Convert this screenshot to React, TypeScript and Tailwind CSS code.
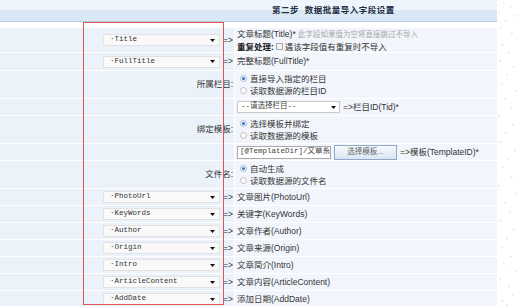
import React from "react";

const cjk = { fontFamily: '"Liberation Sans", "Noto Sans CJK SC", sans-serif' };
const mono = { fontFamily: '"Liberation Mono", "Noto Sans CJK SC", monospace' };

function Arrow() {
  return (
    <svg width="5" height="3" viewBox="0 0 5 3" className="shrink-0">
      <polygon points="0,0 5,0 2.5,3" fill="#111" />
    </svg>
  );
}

function FieldSelect({ label }: { label: string }) {
  return (
    <div className="flex h-[12px] w-[117px] items-center justify-between border border-[#e2e2e2] bg-[#f9f9f9] pl-[6px] pr-[4px]">
      <span className="text-[7.5px] leading-none text-[#333]" style={mono}>
        ·{label}
      </span>
      <Arrow />
    </div>
  );
}

function Radio({ checked }: { checked?: boolean }) {
  return (
    <svg width="7" height="7" viewBox="0 0 7 7" className="mr-[3px] shrink-0">
      <circle cx="3.5" cy="3.5" r="3" fill="#fbfbfb" stroke={checked ? "#8aa6c8" : "#b0b0b0"} strokeWidth="0.8" />
      {checked && <circle cx="3.5" cy="3.5" r="1.5" fill="#2f6fbf" />}
    </svg>
  );
}

function Row({ h, left, children }: { h: string; left: React.ReactNode; children?: React.ReactNode }) {
  return (
    <div className={`flex ${h} border-b border-white`}>
      <div className="flex w-[234px] shrink-0 items-center justify-end bg-[#ecf2fa] pr-px">{left}</div>
      <div className="flex flex-1 flex-col justify-center border-l border-white bg-[#f2f6fc] pl-[2px]">{children}</div>
    </div>
  );
}

function MapLeft({ label }: { label: string }) {
  return (
    <>
      <FieldSelect label={label} />
      <span className="ml-[3px] text-[8.5px] text-[#333]">=&gt;</span>
    </>
  );
}

const tail = [
  ["PhotoUrl", "文章图片(PhotoUrl)"],
  ["KeyWords", "关键字(KeyWords)"],
  ["Author", "文章作者(Author)"],
  ["Origin", "文章来源(Origin)"],
  ["Intro", "文章简介(Intro)"],
  ["ArticleContent", "文章内容(ArticleContent)"],
  ["AddDate", "添加日期(AddDate)"],
];

const dots = [
  [503, 2], [510, 6], [498, 12], [514, 15], [505, 20], [500, 27], [511, 33], [516, 38],
  [502, 44], [508, 52], [499, 60], [513, 66], [506, 74], [501, 83], [515, 90], [504, 98],
  [510, 107], [498, 115], [512, 124], [505, 132], [500, 141], [514, 150], [507, 158],
  [502, 167], [511, 176], [498, 185], [515, 193], [504, 202], [509, 211], [500, 220],
  [513, 229], [506, 238], [501, 247], [510, 256], [503, 263], [515, 270], [499, 279],
  [508, 286], [512, 294], [502, 300], [506, 304],
];

export default function App() {
  return (
    <div className="relative h-[306px] w-[517px] overflow-hidden bg-white text-[8.5px] text-[#333]" style={cjk}>
      <div className="w-[497px]">
        <div className="flex h-[22px] items-center border-b border-[#b3cfe6] bg-gradient-to-b from-[#eef5fc] from-50% to-[#dae8f6] to-50% pl-[272px]">
          <span className="text-[8.5px] font-bold tracking-[0.5px] text-[#1f2f44]">第二步&nbsp;&nbsp;数据批量导入字段设置</span>
        </div>
        <div className="h-[6px]" />

        <Row h="h-[25px]" left={<MapLeft label="Title" />}>
          <div className="leading-[12px]">
            文章标题(Title)* <span className="text-[7.5px] text-[#a8a8a8]">此字段如果值为空将直接跳过不导入</span>
          </div>
          <div className="flex items-center leading-[12px]">
            <span className="mr-[2px] font-bold text-[#222]">重复处理:</span>
            <span className="mr-[2px] h-[7px] w-[7px] border border-[#a8a8a8] bg-[#f4f4f4]" />
            遇该字段值有重复时不导入
          </div>
        </Row>
        <Row h="h-[18px]" left={<MapLeft label="FullTitle" />}>
          <div>完整标题(FullTitle)*</div>
        </Row>
        <Row h="h-[28px]" left={<span>所属栏目:</span>}>
          <div className="flex items-center pl-[3px] leading-[12px]"><Radio checked />直接导入指定的栏目</div>
          <div className="flex items-center pl-[3px] leading-[12px]"><Radio />读取数据源的栏目ID</div>
        </Row>
        <Row h="h-[17px]" left={null}>
          <div className="flex items-center">
            <div className="flex h-[12px] w-[103px] items-center justify-between border border-[#c8c8c8] bg-white pl-[3px] pr-[3px]">
              <span className="text-[7.5px] leading-none text-[#444]" style={mono}>--请选择栏目--</span>
              <Arrow />
            </div>
            <span className="ml-[3px]">=&gt;栏目ID(Tid)*</span>
          </div>
        </Row>
        <Row h="h-[28px]" left={<span>绑定模板:</span>}>
          <div className="flex items-center pl-[3px] leading-[12px]"><Radio checked />选择模板并绑定</div>
          <div className="flex items-center pl-[3px] leading-[12px]"><Radio />读取数据源的模板</div>
        </Row>
        <Row h="h-[17px]" left={null}>
          <div className="flex items-center">
            <div className="flex h-[13px] w-[94px] items-center overflow-hidden whitespace-nowrap border border-[#a9a9a9] bg-white pl-[2px]">
              <span className="text-[7.5px] leading-none text-[#444]" style={mono}>[@TemplateDir]/文章系</span>
            </div>
            <div className="ml-[3px] flex h-[15px] w-[63px] items-center justify-center border border-[#8fa9c9] bg-gradient-to-b from-[#f6f9fd] to-[#d9e6f4] text-[7.5px] text-[#666]">
              选择模板...
            </div>
            <span className="ml-[3px]">=&gt;模板(TemplateID)*</span>
          </div>
        </Row>
        <Row h="h-[28px]" left={<span>文件名:</span>}>
          <div className="flex items-center pl-[3px] leading-[12px]"><Radio checked />自动生成</div>
          <div className="flex items-center pl-[3px] leading-[12px]"><Radio />读取数据源的文件名</div>
        </Row>
        {tail.map(([k, t]) => (
          <Row key={k} h="h-[17px]" left={<MapLeft label={k} />}>
            <div>{t}</div>
          </Row>
        ))}
      </div>

      <svg className="absolute left-0 top-0" width="517" height="306">
        {dots.map(([x, y], i) => (
          <rect key={i} x={x} y={y} width="1.5" height="1.5" fill="#ebe3bd" />
        ))}
      </svg>

      <div className="absolute left-[83px] top-[22px] h-[283px] w-[141px] border-[1.5px] border-[#e25555]" />
    </div>
  );
}
